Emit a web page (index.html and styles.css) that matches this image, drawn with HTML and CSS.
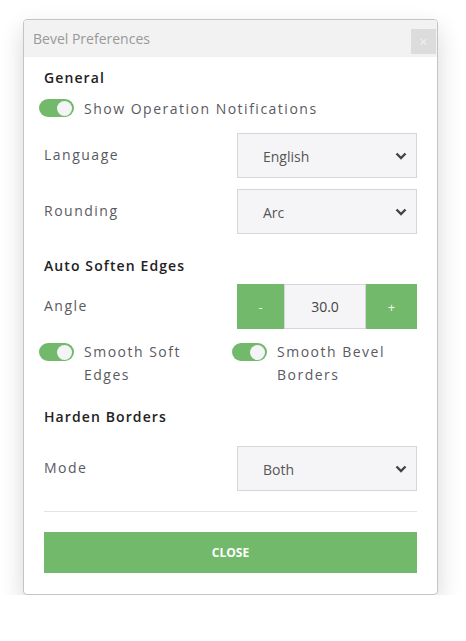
FILE: index.html
```html
<!DOCTYPE html>
<html>
<head>
<meta charset="utf-8">
<link rel="stylesheet" href="styles.css">
</head>
<body>
<div class="dialog">
  <div class="header">
    <span class="title">Bevel Preferences</span>
    <span class="close-x">×</span>
  </div>
  <div class="content">
    <div class="heading h-general">General</div>
    <div class="toggle-row r-notif">
      <span class="toggle"><span class="knob"></span></span>
      <span class="toggle-label">Show Operation Notifications</span>
    </div>
    <div class="row r-lang">
      <span class="label">Language</span>
      <div class="select"><span>English</span>
        <svg class="chev" width="12" height="8" viewBox="0 0 12 8"><path d="M1.5 1.5 L6 6 L10.5 1.5" fill="none" stroke="#444" stroke-width="2.4"/></svg>
      </div>
    </div>
    <div class="row r-round">
      <span class="label">Rounding</span>
      <div class="select"><span>Arc</span>
        <svg class="chev" width="12" height="8" viewBox="0 0 12 8"><path d="M1.5 1.5 L6 6 L10.5 1.5" fill="none" stroke="#444" stroke-width="2.4"/></svg>
      </div>
    </div>
    <div class="heading h-auto">Auto Soften Edges</div>
    <div class="row r-angle">
      <span class="label">Angle</span>
      <div class="stepper">
        <span class="step minus">-</span>
        <span class="step-val">30.0</span>
        <span class="step plus">+</span>
      </div>
    </div>
    <div class="row r-toggles">
      <div class="toggle-row">
        <span class="toggle"><span class="knob"></span></span>
        <span class="toggle-label">Smooth Soft<br>Edges</span>
      </div>
      <div class="toggle-row">
        <span class="toggle"><span class="knob"></span></span>
        <span class="toggle-label">Smooth Bevel<br>Borders</span>
      </div>
    </div>
    <div class="heading h-harden">Harden Borders</div>
    <div class="row r-mode">
      <span class="label">Mode</span>
      <div class="select"><span>Both</span>
        <svg class="chev" width="12" height="8" viewBox="0 0 12 8"><path d="M1.5 1.5 L6 6 L10.5 1.5" fill="none" stroke="#444" stroke-width="2.4"/></svg>
      </div>
    </div>
    <div class="divider"></div>
    <div class="close-btn">CLOSE</div>
  </div>
</div>
</body>
</html>
```

FILE: styles.css
```css
* { box-sizing: border-box; }
html, body { margin: 0; background: #fff; }
body {
  padding: 19px 28px 0 23px;
  font-family: "Open Sans", "Noto Sans", sans-serif;
}
.dialog {
  width: 415px;
  border: 1px solid #c4c4c4;
  border-radius: 4px;
  background: #fff;
  box-shadow: 0 10px 24px rgba(0,0,0,0.16);
  overflow: hidden;
}
.header {
  height: 37px;
  background: #f2f2f2;
  display: flex;
  align-items: center;
  justify-content: space-between;
  padding: 0 1px 0 9px;
}
.title {
  color: #999;
  font-size: 14px;
  letter-spacing: 0;
}
.close-x {
  width: 25px;
  height: 25px;
  background: #dcdcdc;
  color: #f0f0f0;
  font-size: 14px;
  display: flex;
  align-items: center;
  justify-content: center;
  margin-top: 6px;
}
.content {
  padding: 11px 20px 21px 20px;
}
.heading {
  font-size: 14px;
  font-weight: 600;
  color: #222;
  letter-spacing: 1.1px;
  line-height: 20px;
}
.h-auto { margin-top: 22px; }
.h-harden { margin-top: 21px; }
.toggle-row {
  display: flex;
  align-items: flex-start;
  gap: 10px;
  margin-left: -5px;
}
.r-notif { margin-top: 10px; align-items: center; height: 20px; }
.toggle {
  width: 35px;
  height: 18px;
  border-radius: 9px;
  background: #72b96b;
  display: flex;
  align-items: center;
  justify-content: flex-end;
  padding-right: 2px;
  flex: none;
}
.r-toggles .toggle { margin-top: 3px; }
.knob {
  width: 15px;
  height: 15px;
  border-radius: 50%;
  background: #f4f4f7;
}
.toggle-label, .label {
  font-size: 14px;
  color: #5a5a62;
  letter-spacing: 1.5px;
  line-height: 23px;
}
.row {
  display: grid;
  grid-template-columns: 193px 180px;
  align-items: center;
}
.r-lang { margin-top: 15px; }
.r-round { margin-top: 11px; }
.r-angle { margin-top: 8px; }
.r-toggles { margin-top: 11px; align-items: start; }
.r-mode { margin-top: 19px; }
.label { margin-bottom: 3px; }
.select {
  height: 45px;
  background: #f5f5f8;
  border: 1px solid #d5d5dc;
  display: flex;
  align-items: center;
  justify-content: space-between;
  padding: 2px 9px 0 25px;
  font-size: 14px;
  color: #555;
}
.chev { margin-top: -1px; }
.stepper {
  height: 45px;
  display: grid;
  grid-template-columns: 47px 82px 51px;
}
.step {
  background: #72b96b;
  color: #f4f4f0;
  display: flex;
  align-items: center;
  justify-content: center;
  font-size: 13px;
}
.step-val {
  background: #f5f5f8;
  border: 1px solid #d5d5dc;
  display: flex;
  align-items: center;
  justify-content: center;
  font-size: 14px;
  color: #444;
}
.divider {
  margin-top: 20px;
  height: 1px;
  background: #e3e3e6;
}
.close-btn {
  margin-top: 20px;
  height: 41px;
  background: #72b96b;
  color: #fff;
  font-size: 12px;
  font-weight: 700;
  display: flex;
  align-items: center;
  justify-content: center;
}
```
